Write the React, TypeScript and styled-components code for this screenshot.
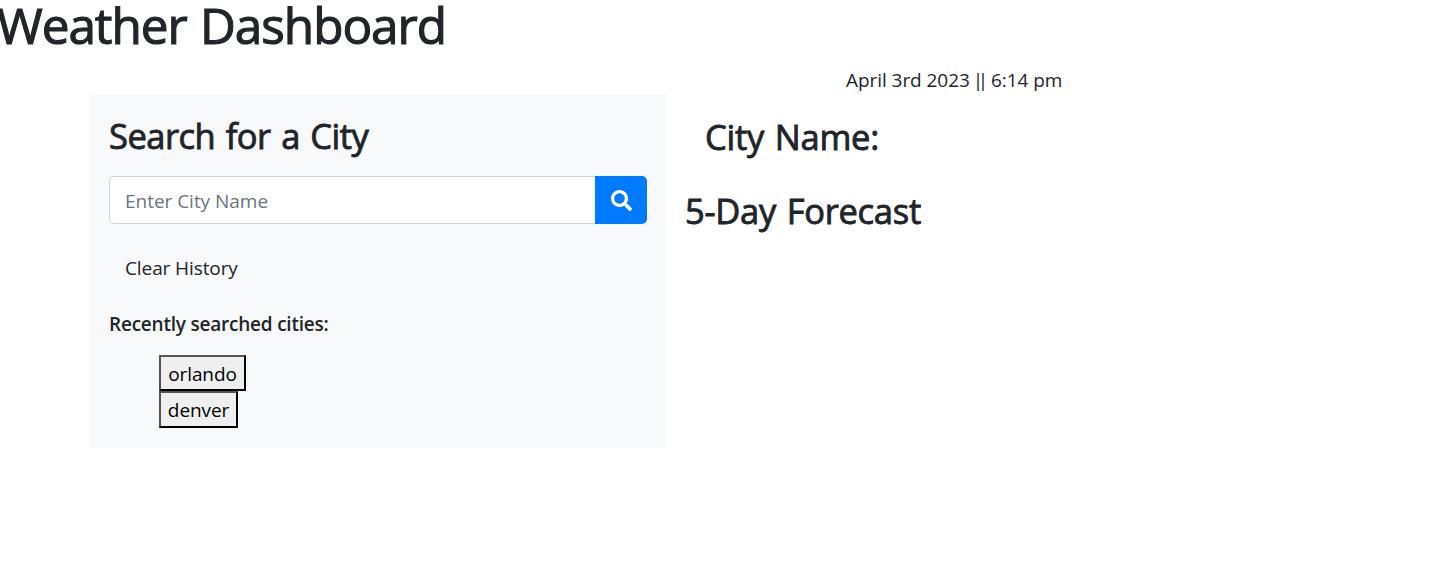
import React from 'react';
import styled, { createGlobalStyle } from 'styled-components';
import { FaSearch } from 'react-icons/fa';

const GlobalStyle = createGlobalStyle`
  *, *::before, *::after { box-sizing: border-box; }
  body {
    margin: 0;
    overflow: hidden;
    background: #fff;
    color: #212529;
    font-family: "Open Sans", "Noto Sans", sans-serif;
    font-size: 19px;
    line-height: 30px;
  }
`;

const PageTitle = styled.h1`
  margin: 0 0 0 -3px;
  height: 65px;
  font-size: 49.5px;
  font-weight: 400;
  line-height: 51px;
  letter-spacing: -1.05px;
  word-spacing: 1.5px;
  -webkit-text-stroke: 1.1px currentColor;
  white-space: nowrap;
`;

const DateLine = styled.p`
  margin: 0 0 0 846px;
  height: 29px;
  letter-spacing: -0.06px;
  white-space: nowrap;
`;

const Divider = styled.span`
  margin: 0 3px 0 -2px;
  letter-spacing: -5.2px;
`;

const Columns = styled.main`
  display: flex;
  align-items: flex-start;
  padding-left: 90px;
`;

const SearchPanel = styled.section`
  width: 576px;
  height: 354px;
  padding: 21px 19px 0;
  background: #f8f9fa;
`;

const Heading = styled.h3<{ $indent?: number; $gap: number; $spacing?: number }>`
  margin: 0 0 ${({ $gap }) => $gap}px ${({ $indent = 0 }) => $indent}px;
  font-size: 34.5px;
  font-weight: 400;
  line-height: 42px;
  letter-spacing: ${({ $spacing = 0 }) => $spacing}px;
  word-spacing: 2px;
  -webkit-text-stroke: 0.85px currentColor;
  white-space: nowrap;
`;

const SearchForm = styled.form`
  display: flex;
  height: 48px;
`;

const CityInput = styled.input`
  flex: 1;
  min-width: 0;
  padding: 2px 15px 0;
  border: 1px solid #ced4da;
  border-right: 0;
  border-radius: 5px 0 0 5px;
  background: #fff;
  color: #495057;
  font: inherit;
  letter-spacing: -0.03px;
  outline: none;
  &::placeholder { color: #6c757d; opacity: 1; }
`;

const SearchButton = styled.button`
  display: flex;
  align-items: center;
  justify-content: center;
  width: 52px;
  padding: 1px 0 0 1px;
  border: 0;
  border-radius: 0 5px 5px 0;
  background: #007bff;
  color: #fff;
  font-size: 21px;
`;

const ClearButton = styled.button`
  display: block;
  margin: 21px 0 0;
  padding: 8px 16px;
  border: 0;
  background: transparent;
  color: #212529;
  font: inherit;
  letter-spacing: -0.1px;
`;

const RecentLabel = styled.h6`
  margin: 21px 0 19px;
  font-size: 19px;
  font-weight: 600;
  line-height: 24px;
  letter-spacing: -0.22px;
`;

const CityList = styled.ul`
  display: flex;
  flex-direction: column;
  align-items: flex-start;
  margin: 0;
  padding: 0 0 0 50px;
  list-style: none;
`;

const CityItem = styled.li<{ $width: number; $height: number }>`
  display: flex;
  width: ${({ $width }) => $width}px;
  height: ${({ $height }) => $height}px;
`;

const CityButton = styled.button`
  flex: 1;
  padding: 1px 0 0;
  border: 2px outset #000;
  background: #efefef;
  color: #000;
  font: inherit;
  letter-spacing: -0.1px;
`;

const ForecastPanel = styled.section`
  padding: 22px 0 0 19px;
`;

const recentCities = [
  { name: 'orlando', width: 87, height: 36 },
  { name: 'denver', width: 79, height: 37 },
];

export default function App() {
  return (
    <>
      <GlobalStyle />
      <PageTitle>Weather Dashboard</PageTitle>
      <DateLine>
        April 3rd 2023 <Divider>||</Divider> 6:14 pm
      </DateLine>
      <Columns>
        <SearchPanel>
          <Heading $gap={19} $spacing={-0.5}>Search for a City</Heading>
          <SearchForm onSubmit={(event) => event.preventDefault()}>
            <CityInput placeholder="Enter City Name" />
            <SearchButton aria-label="Search">
              <FaSearch />
            </SearchButton>
          </SearchForm>
          <ClearButton>Clear History</ClearButton>
          <RecentLabel>Recently searched cities:</RecentLabel>
          <CityList>
            {recentCities.map((city) => (
              <CityItem key={city.name} $width={city.width} $height={city.height}>
                <CityButton>{city.name}</CityButton>
              </CityItem>
            ))}
          </CityList>
        </SearchPanel>
        <ForecastPanel>
          <Heading $indent={20} $gap={32} $spacing={-0.25}>City Name:</Heading>
          <Heading $gap={0} $spacing={-0.27}>5-Day Forecast</Heading>
        </ForecastPanel>
      </Columns>
    </>
  );
}
